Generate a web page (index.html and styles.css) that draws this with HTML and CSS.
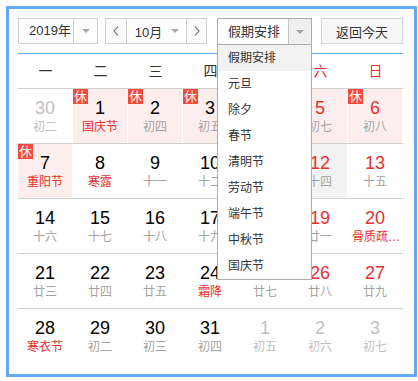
FILE: index.html
```html
<!DOCTYPE html>
<html lang="zh-CN">
<head>
<meta charset="utf-8">
<title>万年历</title>
<link rel="stylesheet" href="styles.css">
</head>
<body>
<div class="cal">
  <div class="head">
    <div class="sel year">
      <span class="sel-text">2019年</span>
      <span class="sel-arrow"><i class="caret"></i></span>
    </div>
    <div class="month-group">
      <span class="nav"><svg width="6" height="10" viewBox="0 0 6 10"><polyline points="5,0.5 1,5 5,9.5" fill="none" stroke="#666" stroke-width="1.1"/></svg></span>
      <span class="month"><span>10月</span><i class="caret"></i></span>
      <span class="nav"><svg width="6" height="10" viewBox="0 0 6 10"><polyline points="1,0.5 5,5 1,9.5" fill="none" stroke="#666" stroke-width="1.1"/></svg></span>
    </div>
    <div class="sel holiday">
      <span class="sel-text">假期安排</span>
      <span class="sel-arrow"><i class="caret"></i></span>
      <ul class="menu">
        <li class="active">假期安排</li>
        <li>元旦</li>
        <li>除夕</li>
        <li>春节</li>
        <li>清明节</li>
        <li>劳动节</li>
        <li>端午节</li>
        <li>中秋节</li>
        <li>国庆节</li>
      </ul>
    </div>
    <div class="today-btn">返回今天</div>
  </div>

  <div class="week">
    <span>一</span><span>二</span><span>三</span><span>四</span><span>五</span><span class="we">六</span><span class="we">日</span>
  </div>

  <div class="row">
    <div class="cell other"><b>30</b><em>初二</em></div>
    <div class="cell rest"><i class="badge">休</i><b>1</b><em class="fest">国庆节</em></div>
    <div class="cell rest"><i class="badge">休</i><b>2</b><em>初四</em></div>
    <div class="cell rest"><i class="badge">休</i><b>3</b><em>初五</em></div>
    <div class="cell rest"><i class="badge">休</i><b>4</b><em>初六</em></div>
    <div class="cell rest we"><i class="badge">休</i><b>5</b><em>初七</em></div>
    <div class="cell rest we"><i class="badge">休</i><b>6</b><em>初八</em></div>
  </div>
  <div class="row">
    <div class="cell rest"><i class="badge">休</i><b>7</b><em class="fest">重阳节</em></div>
    <div class="cell"><b>8</b><em class="fest">寒露</em></div>
    <div class="cell"><b>9</b><em>十一</em></div>
    <div class="cell"><b>10</b><em>十二</em></div>
    <div class="cell"><b>11</b><em>十三</em></div>
    <div class="cell we hover"><b>12</b><em>十四</em></div>
    <div class="cell we"><b>13</b><em>十五</em></div>
  </div>
  <div class="row">
    <div class="cell"><b>14</b><em>十六</em></div>
    <div class="cell"><b>15</b><em>十七</em></div>
    <div class="cell"><b>16</b><em>十八</em></div>
    <div class="cell"><b>17</b><em>十九</em></div>
    <div class="cell"><b>18</b><em>二十</em></div>
    <div class="cell we"><b>19</b><em>廿一</em></div>
    <div class="cell we"><b>20</b><em class="fest long">骨质疏松日</em></div>
  </div>
  <div class="row">
    <div class="cell"><b>21</b><em>廿三</em></div>
    <div class="cell"><b>22</b><em>廿四</em></div>
    <div class="cell"><b>23</b><em>廿五</em></div>
    <div class="cell"><b>24</b><em class="fest">霜降</em></div>
    <div class="cell"><b>25</b><em>廿七</em></div>
    <div class="cell we"><b>26</b><em>廿八</em></div>
    <div class="cell we"><b>27</b><em>廿九</em></div>
  </div>
  <div class="row last">
    <div class="cell"><b>28</b><em class="fest">寒衣节</em></div>
    <div class="cell"><b>29</b><em>初二</em></div>
    <div class="cell"><b>30</b><em>初三</em></div>
    <div class="cell"><b>31</b><em>初四</em></div>
    <div class="cell other"><b>1</b><em>初五</em></div>
    <div class="cell other"><b>2</b><em>初六</em></div>
    <div class="cell other"><b>3</b><em>初七</em></div>
  </div>
</div>
</body>
</html>
```

FILE: styles.css
```css
* { box-sizing: border-box; }

body {
  margin: 0;
  background: #fff;
  font-family: "Liberation Sans", "Noto Sans CJK SC", sans-serif;
  color: #333;
}

.cal {
  margin: 6px 0 0 6px;
  width: 411px;
  height: 371px;
  border: 3px solid #62aaf8;
  padding: 9px 0 0 9px;
}

/* header */
.head {
  display: flex;
  height: 26px;
  font-size: 13px;
}

.sel, .month-group, .today-btn {
  display: flex;
  height: 26px;
  border: 1px solid #cfcfcf;
  background: #fff;
}

.sel-text {
  display: flex;
  align-items: center;
  padding-left: 10px;
  flex: 1;
  line-height: 24px;
}

.sel-arrow {
  display: flex;
  align-items: center;
  justify-content: center;
  border-left: 1px solid #cfcfcf;
}

.caret {
  display: block;
  width: 0;
  height: 0;
  border-left: 4px solid transparent;
  border-right: 4px solid transparent;
  border-top: 4px solid #a6a6a6;
}

.year { width: 80px; }
.year .sel-arrow { width: 24px; }

.month-group {
  margin-left: 7px;
  width: 102px;
}
.nav {
  display: flex;
  align-items: center;
  justify-content: center;
  width: 21px;
  background: #fafafa;
}
.nav:last-child { width: 20px; border-left: 1px solid #cfcfcf; }
.nav:first-child { border-right: 1px solid #cfcfcf; }
.month {
  flex: 1;
  display: flex;
  align-items: center;
  justify-content: center;
  gap: 9px;
  padding-left: 1px;
}

.holiday {
  position: relative;
  margin-left: 10px;
  width: 95px;
  height: 27px;
  border-color: #ababab;
}
.holiday .sel-arrow {
  width: 23px;
  background: #efefef;
  border-left-color: #c4c4c4;
}

.today-btn {
  margin-left: 9px;
  width: 82px;
  align-items: center;
  justify-content: center;
  background: #f7f7f7;
  border-color: #d6d6d6;
}

/* dropdown menu */
.menu {
  position: absolute;
  left: -1px;
  top: 25px;
  width: 95px;
  margin: 0;
  padding: 0;
  list-style: none;
  background: #fff;
  border: 1px solid #ababab;
  z-index: 5;
}
.menu li {
  height: 26px;
  line-height: 26px;
  padding-left: 10px;
  font-size: 12px;
  color: #333;
}
.menu li.active { background: #f2f2f2; }

/* weekday header */
.week {
  display: grid;
  grid-template-columns: repeat(7, 55px);
  margin-top: 9px;
  width: 385px;
  height: 36px;
  border-top: 1px solid #62aaf8;
  border-bottom: 1px solid #cfcfcf;
  font-size: 14px;
  line-height: 34px;
  text-align: center;
  color: #333;
}
.week .we { color: #e8302f; }

/* day rows */
.row {
  display: grid;
  grid-template-columns: repeat(7, 55px);
  width: 385px;
  height: 55px;
  border-bottom: 1px solid #cfcfcf;
}
.row.last { border-bottom: 0; }

.cell {
  position: relative;
  height: 54px;
  padding-top: 9px;
  text-align: center;
  border-right: 1px solid transparent;
  background-clip: padding-box;
}
.cell b {
  display: block;
  font-weight: normal;
  font-size: 18px;
  line-height: 21px;
  color: #000;
}
.cell em {
  display: block;
  font-style: normal;
  font-size: 12px;
  line-height: 16px;
  color: #a3a3a3;
  padding: 0 3px;
  white-space: nowrap;
  overflow: hidden;
  text-overflow: ellipsis;
}
.cell em.long {
  padding: 0 0 0 4px;
  text-align: left;
}
.cell em.fest { color: #e8302f; }
.cell.we b { color: #e8302f; }
.cell.rest { background-color: #fdeeee; }
.cell.hover { background-color: #f3f3f3; }
.cell.other b, .cell.other em { color: #c0c0c0; }

.badge {
  position: absolute;
  left: 0;
  top: 0;
  width: 15px;
  height: 15px;
  background: #f24a3b;
  color: #fff;
  font-style: normal;
  font-size: 13px;
  line-height: 15px;
  text-align: center;
}
```
